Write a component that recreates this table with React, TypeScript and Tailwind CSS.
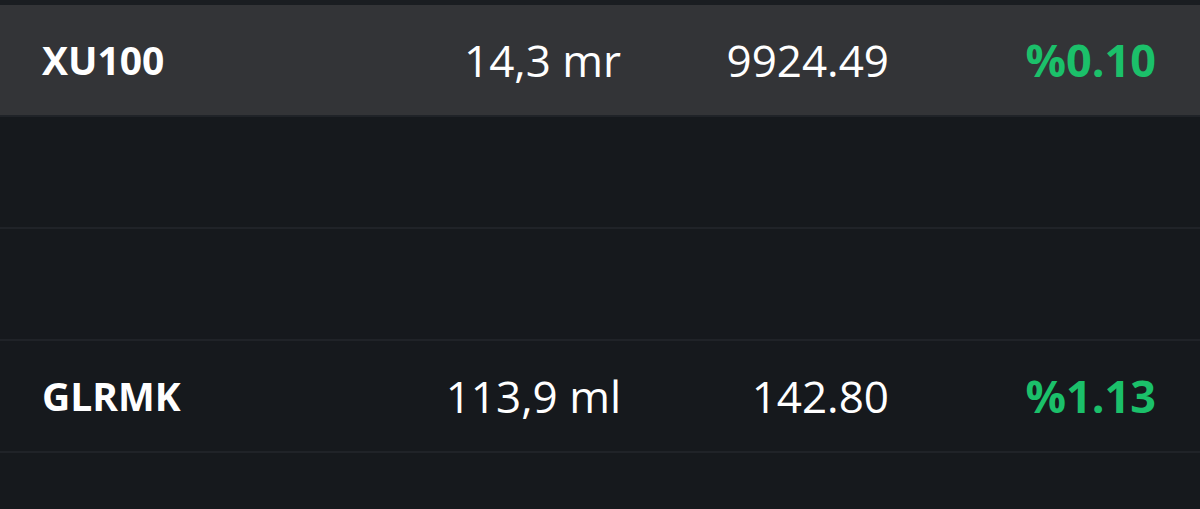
const rows = [
  { name: "XU100", volume: "14,3 mr", price: "9924.49", change: "%0.10", active: true },
  { name: "", volume: "", price: "", change: "" },
  { name: "", volume: "", price: "", change: "" },
  { name: "GLRMK", volume: "113,9 ml", price: "142.80", change: "%1.13" },
  { name: "", volume: "", price: "", change: "" },
];

export default function App() {
  return (
    <div
      className="w-[1200px] h-[509px] overflow-hidden bg-[#16191d] text-white"
      style={{ fontFamily: "'Open Sans', Lato, sans-serif" }}
    >
      <div className="h-[5px] bg-[#1a1d21]" />
      {rows.map((row, i) => (
        <div
          key={i}
          className={
            (row.active ? "h-[112px] bg-[#333437] " : "h-[112px] ") +
            "flex items-center border-b-2 border-[#202328] pl-[42px] pr-[44px]"
          }
        >
          <div className="flex-1 text-[39px] font-bold">{row.name}</div>
          <div className="w-[240px] text-right text-[44px]">{row.volume}</div>
          <div className="w-[268px] text-right text-[44px]">{row.price}</div>
          <div className="w-[267px] text-right text-[45px] font-bold text-[#1bc06a]">{row.change}</div>
        </div>
      ))}
    </div>
  );
}
